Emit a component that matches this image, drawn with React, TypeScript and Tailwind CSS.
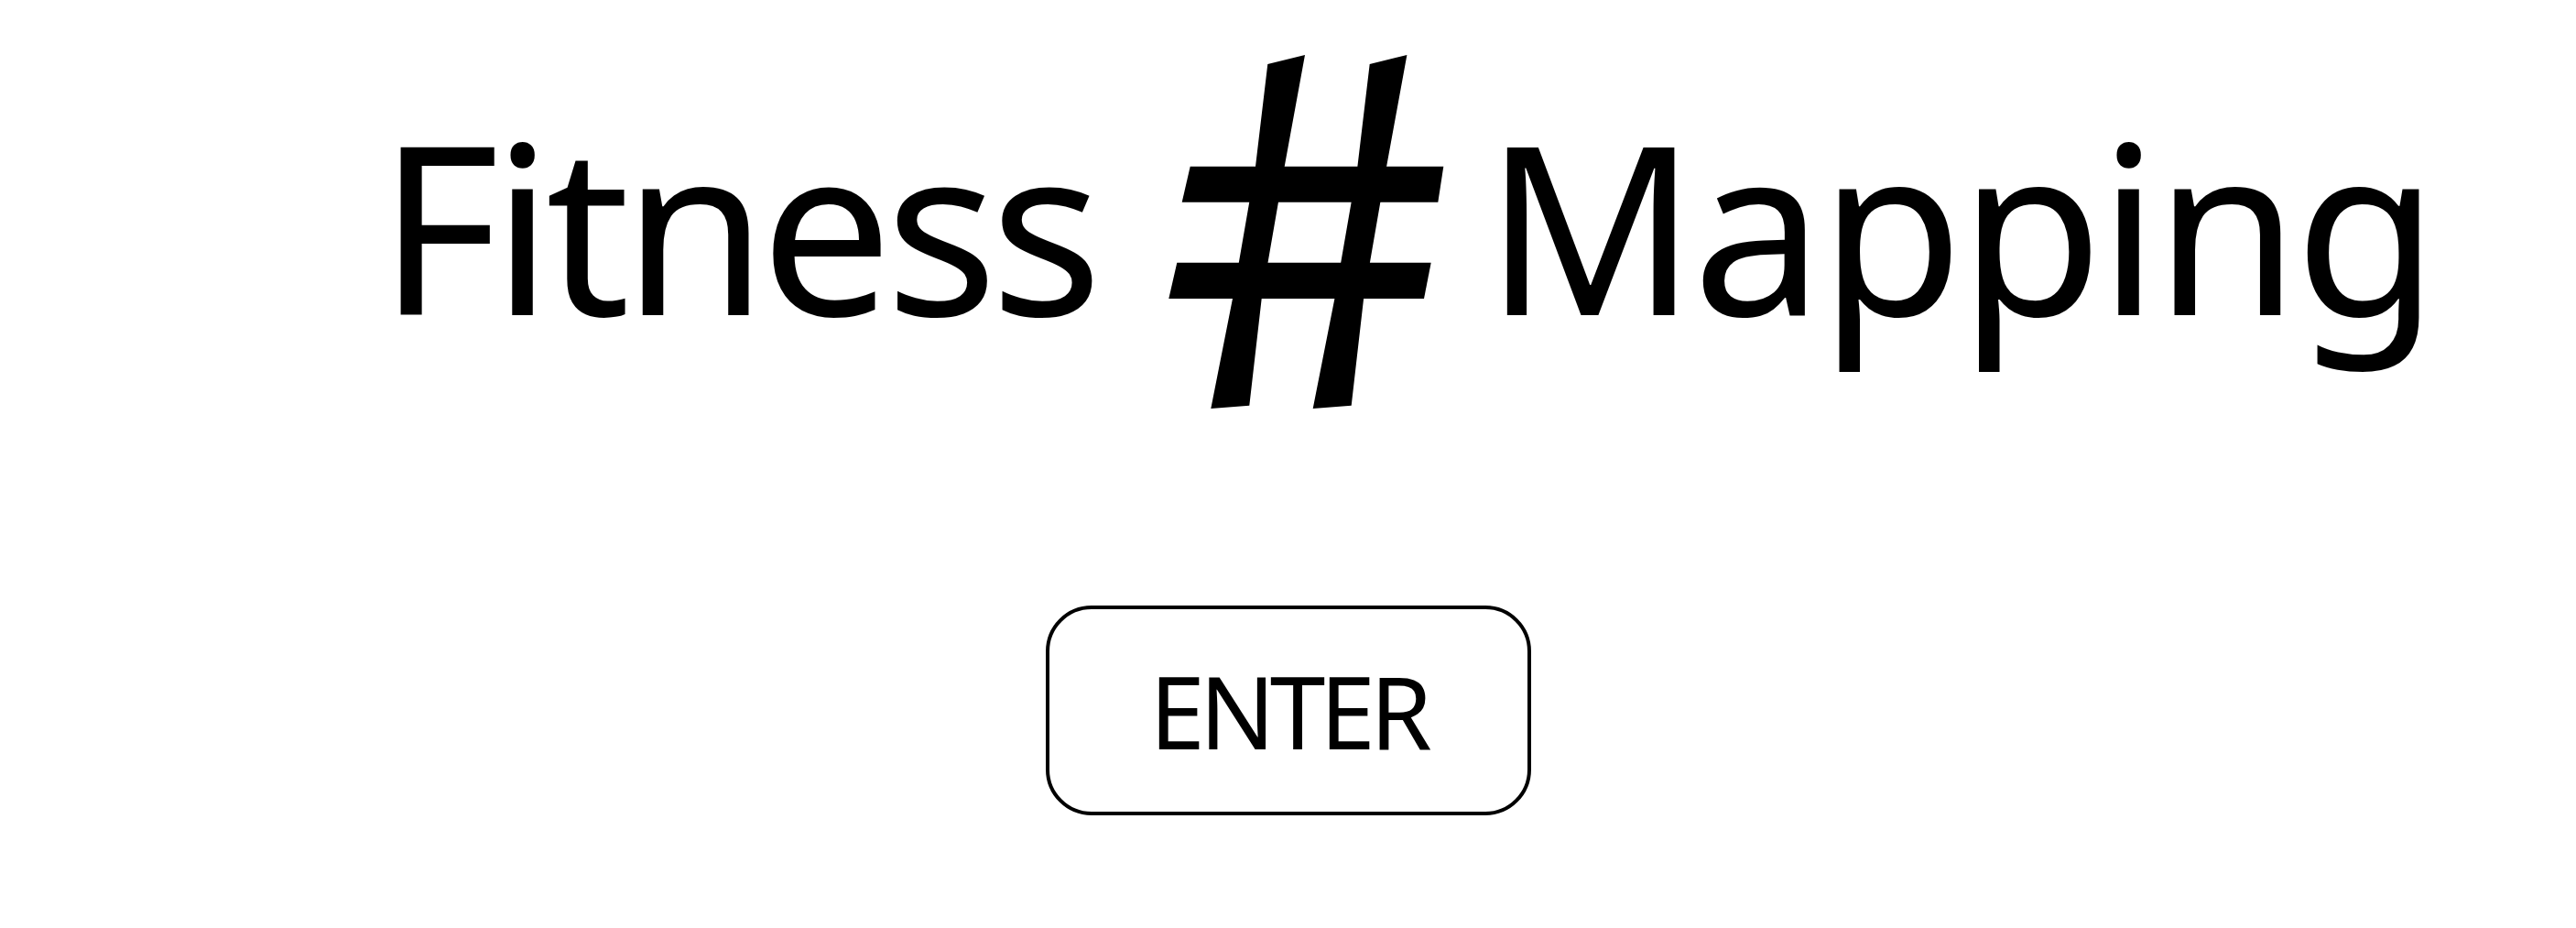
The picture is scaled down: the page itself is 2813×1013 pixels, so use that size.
import React from 'react';

const HashMark: React.FC = () => (
  <svg width="306" height="390" viewBox="0 0 306 390" className="shrink-0" aria-hidden="true">
    {/* vertical strokes */}
    <path d="M109.3 12 L150 2 L127.7 123.7 L102.7 268 L89.3 384.7 L47.3 388 L71 268 L96 123.7 Z" fill="#000" />
    <path d="M220.7 12 L261.4 2 L239.1 123.7 L214.1 268 L200.7 384.7 L158.7 388 L182.4 268 L207.4 123.7 Z" fill="#000" />
    {/* horizontal bars */}
    <path d="M24.7 123.7 L301.3 123.7 L295.3 162.7 L15.7 162.7 Z" fill="#000" />
    <path d="M10.3 228.7 L287.7 228.7 L280 268 L1.3 268 Z" fill="#000" />
  </svg>
);

const App: React.FC = () => {
  return (
    <div className="min-h-screen w-full bg-white text-black font-['Noto_Sans',sans-serif] flex flex-col items-center">
      {/* Title */}
      <div className="flex items-start pt-[58px] pl-[258px]">
        <span className="mt-[59px] text-[256px] leading-none tracking-[-8px]">Fitness</span>
        <div className="ml-[79px] mr-[40px]">
          <HashMark />
        </div>
        <span className="mt-[59px] text-[256px] leading-none tracking-[-5px]">Mapping</span>
      </div>

      {/* Enter */}
      <button className="mt-[213px] w-[530px] h-[229px] border-4 border-black rounded-[50px] flex items-center justify-center bg-white">
        <span className="text-[109px] leading-none tracking-[-6px]">ENTER</span>
      </button>
    </div>
  );
};

export default App;
